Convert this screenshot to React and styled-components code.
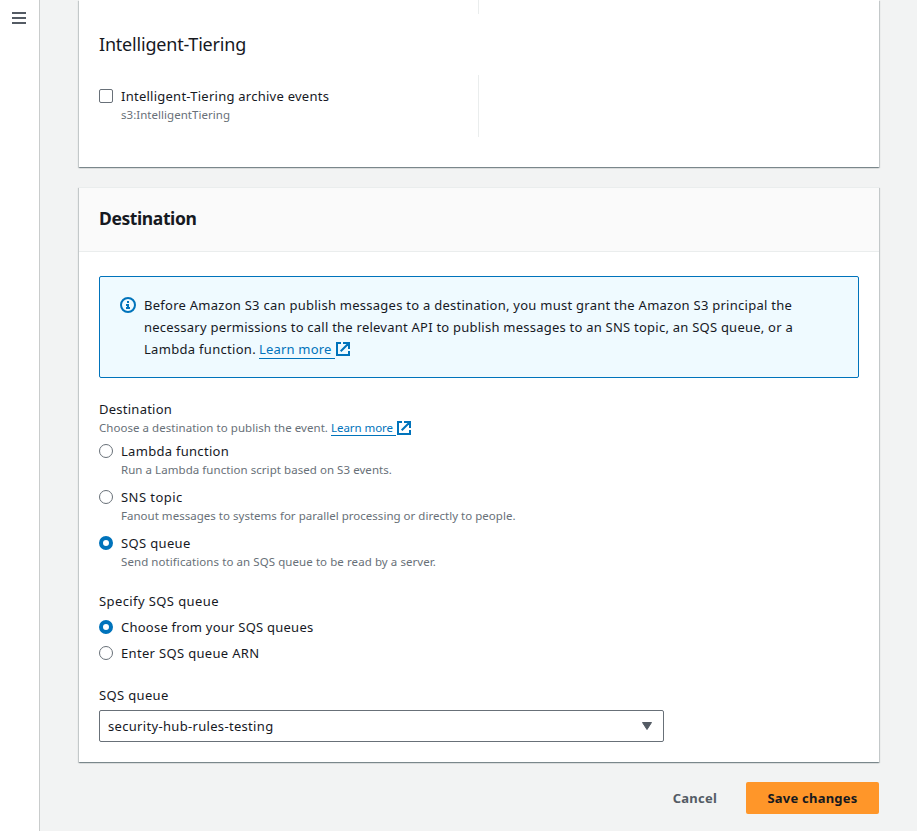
import React, { useState } from "react";
import styled, { createGlobalStyle } from "styled-components";

const GlobalStyle = createGlobalStyle`
  *, *::before, *::after { box-sizing: border-box; }
  body {
    margin: 0;
    background: #f2f3f3;
    color: #16191f;
    font-family: "Noto Sans", "Open Sans", sans-serif;
    font-size: 13px;
    line-height: 22px;
  }
`;

const Shell = styled.div`
  display: flex;
  height: 831px;
  overflow: hidden;
`;

const SideRail = styled.nav`
  flex: none;
  width: 40px;
  padding: 12px 0 0 12px;
  background: #fff;
  border-right: 1px solid #c9cccc;
`;

const MenuButton = styled.button`
  display: block;
  padding: 0;
  border: 0;
  background: none;
  svg { display: block; }
`;

const Main = styled.main`
  flex: 1;
  padding: 0 38px 0 39px;
`;

const Card = styled.section`
  background: #fff;
  box-shadow:
    0 1px 1px 0 rgba(0, 28, 36, 0.3),
    1px 1px 1px 0 rgba(0, 28, 36, 0.15),
    -1px 1px 1px 0 rgba(0, 28, 36, 0.15);
`;

const EventsCard = styled(Card)`
  height: 167px;
  padding: 0 20px;
`;

const DestinationCard = styled(Card)`
  margin-top: 20px;
  height: 575px;
  border-top: 1px solid #eaeded;
`;

const Text = styled.span`
  display: block;
  white-space: nowrap;
  letter-spacing: ${(p) => p.$track ?? 0.25}px;
`;

const Hint = styled(Text)`
  color: #687078;
  font-size: 11.5px;
  line-height: 16px;
`;

const EventColumn = styled.div`
  width: 380px;
  height: ${(p) => p.$height}px;
  padding-top: 10px;
  border-right: 1px solid #eaeded;
`;

const GroupTitle = styled.h3`
  margin: 19px 0 0;
  font-size: 18px;
  font-weight: 400;
  line-height: 22px;
  height: 42px;
  letter-spacing: -0.2px;
`;

const CardHeader = styled.header`
  height: 64px;
  padding: 19px 20px;
  background: #fafafa;
  border-bottom: 1px solid #eaeded;
`;

const CardTitle = styled.h2`
  margin: 0;
  font-size: 17.5px;
  font-weight: 700;
  line-height: 22px;
  letter-spacing: -0.4px;
`;

const CardBody = styled.div`
  padding: 24px 20px 20px;
`;

const Alert = styled.div`
  display: flex;
  gap: 8px;
  height: 102px;
  padding: 17px 20px;
  background: #effaff;
  border: 1px solid #0073bb;
  border-radius: 2px;
`;

const AlertIcon = styled.span`
  flex: none;
  padding-top: 3px;
  svg { display: block; }
`;

const InlineRow = styled.div`
  display: flex;
  align-items: center;
  gap: 3px;
`;

const Link = styled.a`
  display: flex;
  align-items: center;
  color: #0073bb;
  text-decoration: none;
  svg { flex: none; display: block; }
`;

const LinkText = styled(Text)`
  width: 76px;
  height: 20px;
  line-height: 20px;
  border-bottom: 1px solid #0073bb;
`;

const SmallLinkText = styled(LinkText)`
  width: 65px;
  height: 16px;
  font-size: 11.5px;
  line-height: 16px;
`;

const Field = styled.div`
  margin-top: 20px;
`;

const HintRow = styled(InlineRow)`
  height: 16px;
`;

const OptionList = styled.div`
  display: flex;
  flex-direction: column;
  gap: ${(p) => p.$gap}px;
  margin-top: 4px;
`;

const Option = styled.label`
  display: flex;
  align-items: flex-start;
  gap: 8px;
`;

const ControlInput = styled.input`
  appearance: none;
  flex: none;
  width: 14px;
  height: 14px;
  margin: 4px 0 0;
  background: #fff;
  border: 1px solid #687078;
`;

const Radio = styled(ControlInput)`
  border-radius: 50%;
  &:checked {
    border: 4px solid #0073bb;
  }
`;

const Checkbox = styled(ControlInput)`
  border-radius: 2px;
  &:checked { background: #0073bb; }
`;

const SelectBox = styled.button`
  display: flex;
  align-items: center;
  justify-content: space-between;
  width: 565px;
  height: 32px;
  margin-top: 4px;
  padding: 0 10px 0 8px;
  background: #fff;
  border: 1px solid #687078;
  border-radius: 2px;
  color: inherit;
  font: inherit;
  svg { display: block; }
`;

const Actions = styled.footer`
  display: flex;
  justify-content: flex-end;
  gap: 8px;
  margin-top: 20px;
`;

const Button = styled.button`
  height: 32px;
  padding: 0 20px;
  border: 1px solid transparent;
  border-radius: 2px;
  background: transparent;
  color: #545b64;
  font: inherit;
  font-weight: 700;
  letter-spacing: 0.22px;
`;

const PrimaryButton = styled(Button)`
  width: 133px;
  background: #ff9629;
  color: #16191f;
`;

const MenuIcon = () => (
  <svg width="14" height="12" viewBox="0 0 14 12" fill="#545b64" shapeRendering="crispEdges">
    <path d="M0 0h14v2H0zM0 5h14v2H0zM0 10h14v2H0z" />
  </svg>
);

const InfoIcon = () => (
  <svg width="16" height="16" viewBox="0 0 16 16" fill="none" stroke="#0073bb" strokeWidth="2">
    <circle cx="8" cy="8" r="7" />
    <path d="M8 12V8H6M6 11h4M8 4v2" />
  </svg>
);

const ExternalIcon = () => (
  <svg width="16" height="16" viewBox="0 0 16 16" fill="none" stroke="#0073bb" strokeWidth="2">
    <path d="M6 2H2v12h12v-4M8 2h6v6M5.7 10.3L13.5 2.5" />
  </svg>
);

const CaretIcon = () => (
  <svg width="12" height="10" viewBox="0 0 12 10">
    <path d="M1.5 1.5h9L6 8.5z" fill="#545b64" stroke="#545b64" strokeLinejoin="round" />
  </svg>
);

const destinations = [
  { id: "lambda", label: "Lambda function", track: 0.29, hint: "Run a Lambda function script based on S3 events.", hintTrack: 0.054 },
  { id: "sns", label: "SNS topic", track: 0.45, hint: "Fanout messages to systems for parallel processing or directly to people.", hintTrack: 0.02 },
  { id: "sqs", label: "SQS queue", track: 0.35, hint: "Send notifications to an SQS queue to be read by a server.", hintTrack: 0.076 },
];

const queueModes = [
  { id: "choose", label: "Choose from your SQS queues", track: 0.24 },
  { id: "arn", label: "Enter SQS queue ARN", track: 0.33 },
];

function RadioGroup({ name, options, value, onChange, gap }) {
  return (
    <OptionList $gap={gap}>
      {options.map((o) => (
        <Option key={o.id}>
          <Radio type="radio" name={name} checked={value === o.id} onChange={() => onChange(o.id)} />
          <div>
            <Text $track={o.track}>{o.label}</Text>
            {o.hint && <Hint $track={o.hintTrack}>{o.hint}</Hint>}
          </div>
        </Option>
      ))}
    </OptionList>
  );
}

export default function App() {
  const [archive, setArchive] = useState(false);
  const [destination, setDestination] = useState("sqs");
  const [mode, setMode] = useState("choose");

  return (
    <>
      <GlobalStyle />
      <Shell>
        <SideRail>
          <MenuButton aria-label="Open navigation"><MenuIcon /></MenuButton>
        </SideRail>
        <Main>
          <EventsCard>
            <EventColumn $height={14} />
            <GroupTitle>Intelligent-Tiering</GroupTitle>
            <EventColumn $height={62}>
              <Option>
                <Checkbox type="checkbox" checked={archive} onChange={() => setArchive(!archive)} />
                <div>
                  <Text>Intelligent-Tiering archive events</Text>
                  <Hint $track={0.035}>s3:IntelligentTiering</Hint>
                </div>
              </Option>
            </EventColumn>
          </EventsCard>

          <DestinationCard>
            <CardHeader><CardTitle>Destination</CardTitle></CardHeader>
            <CardBody>
              <Alert>
                <AlertIcon><InfoIcon /></AlertIcon>
                <div>
                  <Text $track={0.258}>Before Amazon S3 can publish messages to a destination, you must grant the Amazon S3 principal the</Text>
                  <Text $track={0.234}>necessary permissions to call the relevant API to publish messages to an SNS topic, an SQS queue, or a</Text>
                  <InlineRow>
                    <Text $track={0.3}>Lambda function.</Text>
                    <Link href="#">
                      <LinkText $track={0.2}>Learn more</LinkText>
                      <ExternalIcon />
                    </Link>
                  </InlineRow>
                </div>
              </Alert>

              <Field>
                <Text>Destination</Text>
                <HintRow>
                  <Hint $track={0.043}>Choose a destination to publish the event.</Hint>
                  <Link href="#">
                    <SmallLinkText $track={-0.05}>Learn more</SmallLinkText>
                    <ExternalIcon />
                  </Link>
                </HintRow>
                <RadioGroup name="destination" options={destinations} value={destination} onChange={setDestination} gap={8} />
              </Field>

              <Field>
                <Text $track={0.4}>Specify SQS queue</Text>
                <RadioGroup name="mode" options={queueModes} value={mode} onChange={setMode} gap={4} />
              </Field>

              <Field>
                <Text $track={0.35}>SQS queue</Text>
                <SelectBox>
                  <Text $track={0.32}>security-hub-rules-testing</Text>
                  <CaretIcon />
                </SelectBox>
              </Field>
            </CardBody>
          </DestinationCard>

          <Actions>
            <Button>Cancel</Button>
            <PrimaryButton>Save changes</PrimaryButton>
          </Actions>
        </Main>
      </Shell>
    </>
  );
}
